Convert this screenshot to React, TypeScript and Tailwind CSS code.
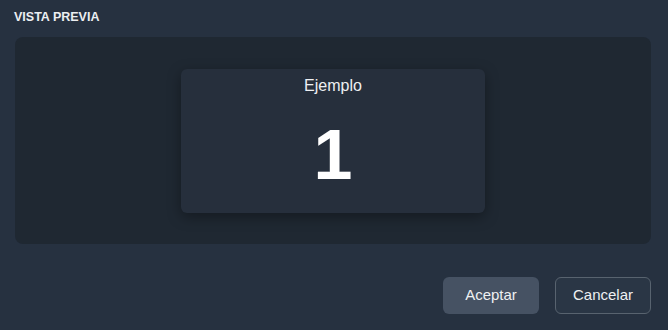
export default function App() {
  return (
    <div
      className="w-[668px] h-[330px] bg-[#263140] flex flex-col pl-[15px] pr-[17px] pt-[9px]"
      style={{ fontFamily: '"Liberation Sans", Arial, sans-serif' }}
    >
      <h2 className="text-[12.5px] font-bold uppercase text-[#eceef1] leading-[16px] -ml-[1px]">Vista previa</h2>

      {/* Preview panel */}
      <div className="mt-[12px] h-[207px] rounded-[8px] bg-[#1f2832] flex items-center justify-center">
        <div className="w-[304px] h-[144px] rounded-[6px] bg-[#262f3c] shadow-[0_4px_14px_rgba(0,0,0,0.35)] flex flex-col items-center pt-[5px]">
          <div className="text-[16px] leading-[24px] text-[#eef0f2]">Ejemplo</div>
          <div className="flex-1 flex items-center justify-center">
            <span className="text-[70px] leading-none font-bold text-white">1</span>
          </div>
        </div>
      </div>

      {/* Actions */}
      <div className="mt-[33px] flex justify-end gap-[16px]">
        <button className="w-[96px] h-[37px] rounded-[6px] bg-[#465263] text-[15px] text-[#eef0f2]">Aceptar</button>
        <button className="w-[96px] h-[37px] rounded-[6px] bg-[#2a3645] border border-[#58636f] text-[15px] text-[#eef0f2]">
          Cancelar
        </button>
      </div>
    </div>
  )
}
